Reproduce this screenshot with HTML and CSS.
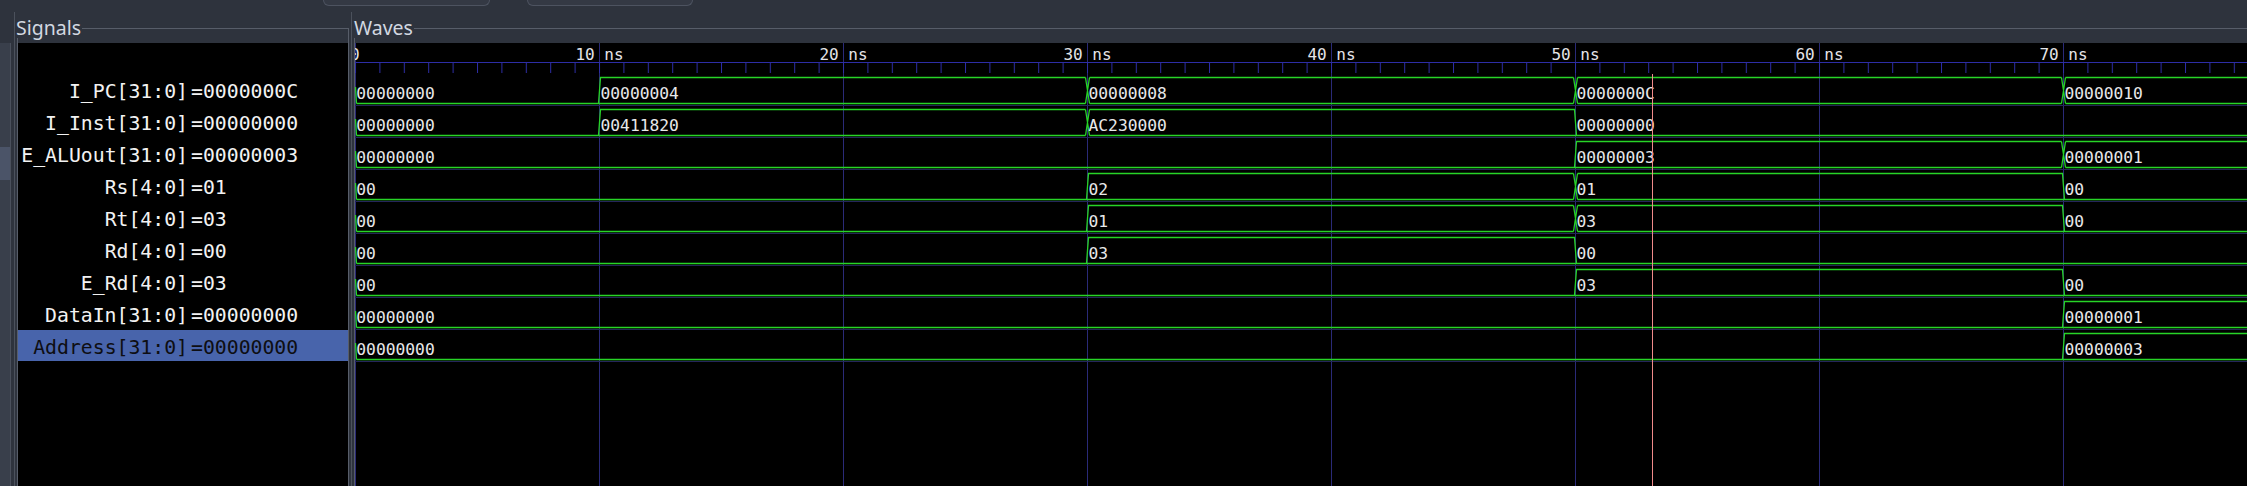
FILE: index.html
```html
<!DOCTYPE html>
<html>
<head>
<meta charset="utf-8">
<title>Waves</title>
<link rel="stylesheet" href="styles.css">
</head>
<body>
<div class="app">
  <div class="topbar">
    <div class="tab tab-1"></div>
    <div class="tab tab-2"></div>
  </div>
  <div class="main">
    <div class="strip"><div class="strip-hl"></div></div>
    <div class="sep"></div>
    <section class="frame frame-sig">
      <div class="frame-head"><span class="frame-label">Signals</span><span class="frame-rule"></span></div>
      <div class="frame-body">
        <div class="pane sig-list">
          <div class="sig-blank"></div>
          <div class="sig-row"><span class="sig-name">I_PC[31:0]</span><span class="sig-val">=0000000C</span></div>
          <div class="sig-row"><span class="sig-name">I_Inst[31:0]</span><span class="sig-val">=00000000</span></div>
          <div class="sig-row"><span class="sig-name">E_ALUout[31:0]</span><span class="sig-val">=00000003</span></div>
          <div class="sig-row"><span class="sig-name">Rs[4:0]</span><span class="sig-val">=01</span></div>
          <div class="sig-row"><span class="sig-name">Rt[4:0]</span><span class="sig-val">=03</span></div>
          <div class="sig-row"><span class="sig-name">Rd[4:0]</span><span class="sig-val">=00</span></div>
          <div class="sig-row"><span class="sig-name">E_Rd[4:0]</span><span class="sig-val">=03</span></div>
          <div class="sig-row"><span class="sig-name">DataIn[31:0]</span><span class="sig-val">=00000000</span></div>
          <div class="sig-row is-selected"><span class="sig-name">Address[31:0]</span><span class="sig-val">=00000000</span></div>
        </div>
      </div>
    </section>
    <div class="sep"></div>
    <section class="frame frame-waves">
      <div class="frame-head"><span class="frame-label">Waves</span><span class="frame-rule"></span></div>
      <div class="frame-body">
        <div class="pane wave-pane">
          <svg class="wave-svg" width="1898" height="443" viewBox="0 0 1898 443">
            <defs>
              <pattern id="ticks" width="24.4" height="10" patternUnits="userSpaceOnUse">
                <rect class="tick" x="0" y="0" width="1" height="10"/>
              </pattern>
              <pattern id="grid" width="244" height="443" patternUnits="userSpaceOnUse">
                <rect class="grid" x="0" y="0" width="1" height="443"/>
              </pattern>
              <pattern id="rowsep" width="1898" height="32" patternUnits="userSpaceOnUse">
                <rect class="rowsep" x="0" y="30" width="1898" height="1"/>
              </pattern>
            </defs>
            <rect x="0" y="0" width="1898" height="443" fill="url(#grid)"/>
            <rect x="0" y="32" width="1898" height="288" fill="url(#rowsep)"/>
            <rect class="tick" x="0" y="19" width="1898" height="1"/>
            <rect x="0" y="20" width="1898" height="10" fill="url(#ticks)"/>
            <g class="tl-text">
              <text x="-5" y="17" text-anchor="start">0</text>
              <text x="244.5" y="17">10 ns</text>
              <text x="488.5" y="17">20 ns</text>
              <text x="732.5" y="17">30 ns</text>
              <text x="976.5" y="17">40 ns</text>
              <text x="1220.5" y="17">50 ns</text>
              <text x="1464.5" y="17">60 ns</text>
              <text x="1708.5" y="17">70 ns</text>
            </g>

            <g transform="translate(0,32)">
              <path class="wave" d="M0.5 12L1.5 28.5 M1.5 28.5H730.5 M243.5 28.5L245.5 2.5H730.5 M730.5 2.5L734.5 28.5 M730.5 28.5L734.5 2.5 M734.5 2.5H1218.5 M734.5 28.5H1218.5 M1218.5 2.5L1222.5 28.5 M1218.5 28.5L1222.5 2.5 M1222.5 2.5H1706.5 M1222.5 28.5H1706.5 M1706.5 2.5L1710.5 28.5 M1706.5 28.5L1710.5 2.5 M1710.5 2.5H1898 M1710.5 28.5H1898"/>
              <g class="wv-text">
                <text x="1.3" y="24.3">00000000</text>
                <text x="245.5" y="24.3">00000004</text>
                <text x="733.5" y="24.3">00000008</text>
                <text x="1221.5" y="24.3">0000000C</text>
                <text x="1709.5" y="24.3">00000010</text>
              </g>
            </g>

            <g transform="translate(0,64)">
              <path class="wave" d="M0.5 12L1.5 28.5 M1.5 28.5H730.5 M243.5 28.5L245.5 2.5H730.5 M730.5 2.5L734.5 28.5 M730.5 28.5L734.5 2.5 M734.5 2.5H1219.5L1221.5 28.5 M734.5 28.5H1898"/>
              <g class="wv-text">
                <text x="1.3" y="24.3">00000000</text>
                <text x="245.5" y="24.3">00411820</text>
                <text x="733.5" y="24.3">AC230000</text>
                <text x="1221.5" y="24.3">00000000</text>
              </g>
            </g>

            <g transform="translate(0,96)">
              <path class="wave" d="M0.5 12L1.5 28.5 M1.5 28.5H1706.5 M1219.5 28.5L1221.5 2.5H1706.5 M1706.5 2.5L1710.5 28.5 M1706.5 28.5L1710.5 2.5 M1710.5 2.5H1898 M1710.5 28.5H1898"/>
              <g class="wv-text">
                <text x="1.3" y="24.3">00000000</text>
                <text x="1221.5" y="24.3">00000003</text>
                <text x="1709.5" y="24.3">00000001</text>
              </g>
            </g>

            <g transform="translate(0,128)">
              <path class="wave" d="M0.5 12L1.5 28.5 M1.5 28.5H1218.5 M731.5 28.5L733.5 2.5H1218.5 M1218.5 2.5L1222.5 28.5 M1218.5 28.5L1222.5 2.5 M1222.5 2.5H1707.5L1709.5 28.5 M1222.5 28.5H1898"/>
              <g class="wv-text">
                <text x="1.3" y="24.3">00</text>
                <text x="733.5" y="24.3">02</text>
                <text x="1221.5" y="24.3">01</text>
                <text x="1709.5" y="24.3">00</text>
              </g>
            </g>

            <g transform="translate(0,160)">
              <path class="wave" d="M0.5 12L1.5 28.5 M1.5 28.5H1218.5 M731.5 28.5L733.5 2.5H1218.5 M1218.5 2.5L1222.5 28.5 M1218.5 28.5L1222.5 2.5 M1222.5 2.5H1707.5L1709.5 28.5 M1222.5 28.5H1898"/>
              <g class="wv-text">
                <text x="1.3" y="24.3">00</text>
                <text x="733.5" y="24.3">01</text>
                <text x="1221.5" y="24.3">03</text>
                <text x="1709.5" y="24.3">00</text>
              </g>
            </g>

            <g transform="translate(0,192)">
              <path class="wave" d="M0.5 12L1.5 28.5 M1.5 28.5H1898 M731.5 28.5L733.5 2.5H1219.5L1221.5 28.5"/>
              <g class="wv-text">
                <text x="1.3" y="24.3">00</text>
                <text x="733.5" y="24.3">03</text>
                <text x="1221.5" y="24.3">00</text>
              </g>
            </g>

            <g transform="translate(0,224)">
              <path class="wave" d="M0.5 12L1.5 28.5 M1.5 28.5H1898 M1219.5 28.5L1221.5 2.5H1707.5L1709.5 28.5"/>
              <g class="wv-text">
                <text x="1.3" y="24.3">00</text>
                <text x="1221.5" y="24.3">03</text>
                <text x="1709.5" y="24.3">00</text>
              </g>
            </g>

            <g transform="translate(0,256)">
              <path class="wave" d="M0.5 12L1.5 28.5 M1.5 28.5H1898 M1707.5 28.5L1709.5 2.5H1898"/>
              <g class="wv-text">
                <text x="1.3" y="24.3">00000000</text>
                <text x="1709.5" y="24.3">00000001</text>
              </g>
            </g>

            <g transform="translate(0,288)">
              <path class="wave" d="M0.5 12L1.5 28.5 M1.5 28.5H1898 M1707.5 28.5L1709.5 2.5H1898"/>
              <g class="wv-text">
                <text x="1.3" y="24.3">00000000</text>
                <text x="1709.5" y="24.3">00000003</text>
              </g>
            </g>

            <rect class="cursor" x="1297" y="31" width="1" height="412"/>
          </svg>
        </div>
      </div>
    </section>
  </div>
</div>
</body>
</html>
```

FILE: styles.css
```css
html, body {
  margin: 0;
  padding: 0;
}

body {
  background: #2e333d;
  width: 2247px;
  height: 486px;
  overflow: hidden;
  font-family: "Noto Sans", "DejaVu Sans", sans-serif;
}

.app {
  display: flex;
  flex-direction: column;
  height: 486px;
}

.topbar {
  display: flex;
  height: 6px;
  flex: none;
}

.tab {
  height: 6px;
  box-sizing: border-box;
  background: #343944;
  border: 1px solid #4d5360;
  border-top: none;
  border-radius: 0 0 7px 7px;
}

.tab-1 {
  margin-left: 323px;
  width: 167px;
}

.tab-2 {
  margin-left: 37px;
  width: 166px;
}

.main {
  display: flex;
  flex: 1;
  min-height: 0;
}

.strip {
  width: 10px;
  flex: none;
  margin-top: 37px;
  margin-right: 3px;
  background: #393f4b;
  border-right: 1px solid #4a505c;
}

.strip-hl {
  margin-top: 104px;
  height: 33px;
  background: #4b5468;
}

.sep {
  width: 1px;
  flex: none;
  margin-top: 6px;
  margin-right: 2px;
  background: #4b515c;
}

.frame {
  display: flex;
  flex-direction: column;
  flex: none;
  margin-top: 11px;
  box-sizing: border-box;
}

.frame-sig {
  width: 332px;
  margin-right: 2px;
}

.frame-waves {
  width: 1900px;
}

.frame-head {
  display: flex;
  height: 21px;
  flex: none;
}

.frame-label {
  font-size: 19.5px;
  line-height: 21px;
  color: #d2d8e1;
  margin-right: 1px;
  white-space: nowrap;
}

.frame-sig .frame-label {
  margin-left: -1px;
}

.frame-rule {
  flex: 1;
  margin-top: 11px;
  border-top: 1px solid #575d69;
  border-right: 1px solid #575d69;
}

.frame-body {
  flex: 1;
  display: flex;
  flex-direction: column;
  border-left: 1px solid #575d69;
  border-right: 1px solid #575d69;
  padding-top: 5px;
  min-height: 0;
}

.pane {
  flex: 1;
  background: #000;
  overflow: hidden;
}

.sig-list {
  font-family: "DejaVu Sans Mono", monospace;
  font-size: 19.8px;
  color: #f2f2f2;
}

.sig-blank {
  height: 31px;
}

.sig-row {
  display: flex;
  height: 31px;
  margin-bottom: 1px;
  box-sizing: border-box;
  padding-top: 5px;
  line-height: 26px;
  white-space: pre;
}

.sig-name {
  width: 170px;
  flex: none;
  text-align: right;
  margin-right: 3px;
}

.sig-row.is-selected {
  background: #4864ab;
  color: #0e0e12;
}

.wave-svg {
  display: block;
}

.tick {
  fill: #2d2da6;
}

.grid {
  fill: #2a2a78;
}

.rowsep {
  fill: #25255a;
}

.tl-text {
  font-family: "DejaVu Sans Mono", monospace;
  font-size: 16px;
  fill: #e4e4e8;
  text-anchor: middle;
}

.wave {
  fill: none;
  stroke: #27d427;
  stroke-width: 1.3;
}

.wv-text {
  font-family: "DejaVu Sans Mono", monospace;
  font-size: 16.3px;
  fill: #e8e8ea;
}

.cursor {
  fill: #f08a8a;
}
```
